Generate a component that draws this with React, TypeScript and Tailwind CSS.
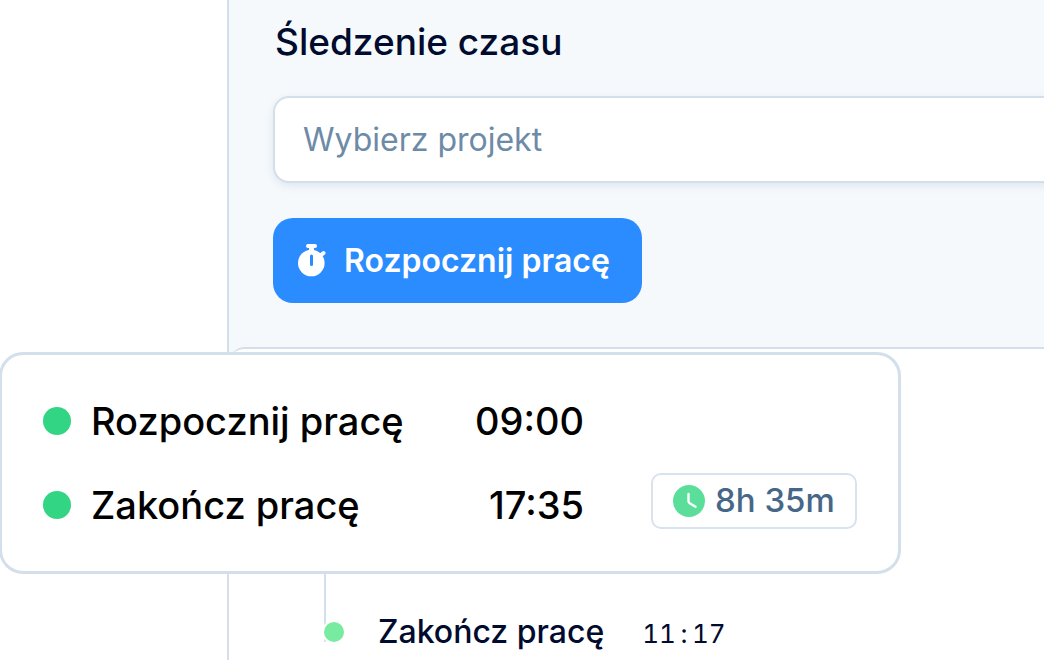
const entries = [
  { label: 'Rozpocznij pracę', time: '09:00' },
  { label: 'Zakończ pracę', time: '17:35', total: '8h 35m' },
];

function StopwatchIcon() {
  return (
    <svg width="28" height="34" viewBox="0 0 28 34" aria-hidden="true" className="shrink-0">
      <circle cx="13.3" cy="19" r="13.3" fill="#fff" />
      <path d="M10 2h7M24 10.300l1.500-1.300" stroke="#fff" strokeWidth="4" strokeLinecap="round" />
      <path d="M13.500 3v6" stroke="#fff" strokeWidth="5" />
      <path d="M13.500 12v8.500" stroke="#2b8cff" strokeWidth="3" strokeLinecap="round" />
    </svg>
  );
}

function ClockIcon() {
  return (
    <svg width="32" height="32" viewBox="0 0 32 32" aria-hidden="true" className="shrink-0">
      <circle cx="16" cy="16" r="16" fill="#5cde9b" />
      <path
        d="M15.500 9v7q0 1.500 1.200 2.200l5.800 3.600"
        fill="none"
        stroke="#fff"
        strokeWidth="2.400"
        strokeLinecap="round"
        strokeLinejoin="round"
      />
    </svg>
  );
}

function TimeCard() {
  return (
    <section className="absolute top-[352px] -left-px rounded-3xl border-3 border-[#d3dfeb] bg-white px-[41px] py-6">
      <ul>
        {entries.map((entry) => (
          <li key={entry.label} className="flex h-[84px] items-center">
            <span className="size-7 shrink-0 rounded-full bg-[#32d583]" />
            <span className="ml-5 w-[340px] text-[38px] font-medium text-black">{entry.label}</span>
            <time className="w-[153px] text-right text-[38px] font-medium text-black">
              {entry.time}
            </time>
            <span className="ml-[67px] flex w-[206px]">
              {entry.total && (
                <span className="mb-2 flex h-14 w-full items-center gap-2.5 rounded-[10px] border-2 border-[#d9e3ee] pl-5 text-[33px] font-medium text-[#476788]">
                  <ClockIcon />
                  {entry.total}
                </span>
              )}
            </span>
          </li>
        ))}
      </ul>
    </section>
  );
}

export default function App() {
  return (
    <div className="relative h-screen overflow-hidden bg-white font-['Inter',sans-serif]">
      <main className="ml-[227px] flex h-full flex-col border-l-2 border-[#d3dfeb] bg-[#f5f9fc]">
        <div className="flex flex-col items-start pt-4 pb-11 pl-11">
          <h1 className="pl-0.5 text-[37px] leading-[52px] font-medium text-[#000b2e]">
            <label htmlFor="project">Śledzenie czasu</label>
          </h1>

          <select
            id="project"
            defaultValue=""
            className="mt-7 -mr-6 h-[87px] appearance-none self-stretch rounded-2xl border-2 border-[#d3dfeb] bg-white px-7 text-[32px] text-[#6d8aa6] shadow-[0_3px_8px_rgba(71,103,136,0.12)]"
          >
            <option value="">Wybierz projekt</option>
          </select>

          <button
            type="button"
            className="mt-[35px] flex h-[85px] items-center gap-[18px] rounded-[20px] bg-[#2b8cff] pr-8 pl-[25px] text-[32px] font-semibold text-white"
          >
            <StopwatchIcon />
            Rozpocznij pracę
          </button>
        </div>

        <section className="flex grow flex-col justify-end rounded-tl-2xl border-t-2 border-[#d3dfeb] bg-white pb-1">
          <div className="flex items-end pl-[95px]">
            <div className="mb-3.5 h-32 w-0.5 bg-[#d3dfeb]" />
            <span className="-ml-0.5 mb-3.5 size-5 rounded-full bg-[#77eba0] ring-2 ring-white" />
            <div className="ml-[34px] flex items-baseline gap-[38px] text-[#000b2e]">
              <span className="text-[32px] font-medium">Zakończ pracę</span>
              <time className="text-[26px] tabular-nums">
                11<span className="inline-block w-4 text-center">:</span>17
              </time>
            </div>
          </div>
        </section>
      </main>

      <TimeCard />
    </div>
  );
}
